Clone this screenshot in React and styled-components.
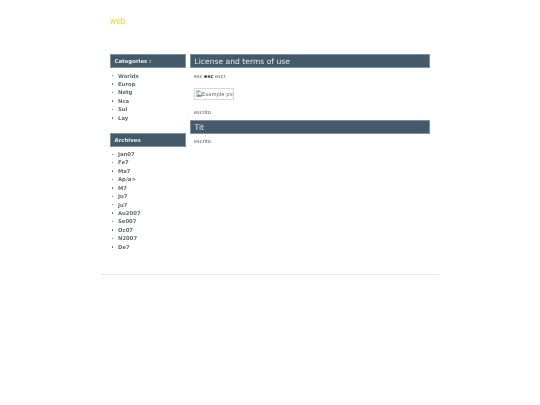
import React from "react";
import styled, { createGlobalStyle } from "styled-components";

const Global = createGlobalStyle`
  html, body { margin: 0; padding: 0; background: #fff; }
  body { font-family: "DejaVu Sans", Verdana, sans-serif; color: #444; }
`;

const Page = styled.div`
  width: 338px;
  margin: 0 0 0 101px;
  height: 405px;
  filter: blur(0.3px);
`;

const Masthead = styled.header`
  height: 54px;
  padding: 16px 0 0 9px;
  box-sizing: border-box;
  font-family: "Liberation Sans", Arial, sans-serif;
  font-size: 8.5px;
  line-height: 10px;
  color: #ebd52a;
`;

const Columns = styled.div`
  display: flex;
  gap: 4px;
  padding: 0 9px;
  height: 220px;
`;

const Sidebar = styled.aside`
  width: 76px;
  flex: none;
`;

const Main = styled.main`
  width: 240px;
  flex: none;
`;

const SideHeading = styled.h2`
  margin: 0;
  height: 14px;
  box-sizing: border-box;
  padding-left: 3.5px;
  background: #44596a;
  border: 1px solid #7d93a2;
  color: #e9eef1;
  font-size: 5.4px;
  font-weight: 700;
  line-height: 13px;
`;

const List = styled.ul`
  margin: 0 0 10.5px;
  padding: 3.5px 0 0 8px;
  list-style: none;
`;

const Item = styled.li`
  height: 8.43px;
  font-size: 5.3px;
  line-height: 8.43px;
  font-weight: 700;
  color: #5b6b78;
  position: relative;
  &::before {
    content: "";
    position: absolute;
    left: -6px;
    top: 3.5px;
    width: 1.4px;
    height: 1.4px;
    border-radius: 50%;
    background: #4c5c69;
  }
`;

const MainHeading = styled.h1`
  margin: ${(p) => p.$gap}px 0 0;
  height: 14px;
  box-sizing: border-box;
  padding-left: 3.5px;
  background: #44596a;
  border: 1px solid #7d93a2;
  color: #e4e9ec;
  font-size: 7.6px;
  font-weight: 400;
  line-height: 13px;
`;

const Paragraph = styled.p`
  margin: 0;
  padding: ${(p) => p.$top}px 0 0 4px;
  font-size: 5px;
  line-height: 8px;
  color: #444;
  strong { color: #2c2c2c; }
`;

const Picture = styled.div`
  margin: 8px 0 0 4px;
  width: 40px;
  height: 12px;
  box-sizing: border-box;
  border: 1px solid #d8d8d8;
  padding: 1px;
  display: flex;
  align-items: center;
  overflow: hidden;
  white-space: nowrap;
  font-size: 5.2px;
  color: #666;
  svg { flex: none; width: 6px; height: 7px; }
`;

const Footer = styled.footer`
  border-top: 1px solid #e6e6e6;
`;

const categories = ["Worlds", "Europ", "Netg", "Nca", "Sui", "Lay"];
const archives = ["Jan07", "Fe7", "Ma7", "Ap/a>", "M7", "Ju7", "Ju7", "Au2007", "Se007", "Oc07", "N2007", "De7"];

export default function App() {
  return (
    <>
      <Global />
      <Page>
        <Masthead>web</Masthead>
        <Columns>
          <Sidebar>
            <SideHeading>Categories :</SideHeading>
            <List>{categories.map((c, i) => <Item key={i}>{c}</Item>)}</List>
            <SideHeading>Archives</SideHeading>
            <List>{archives.map((c, i) => <Item key={i}>{c}</Item>)}</List>
          </Sidebar>
          <Main>
            <MainHeading $gap={0}>License and terms of use</MainHeading>
            <Paragraph $top={3.5}>esc <strong>esc</strong> escr</Paragraph>
            <Picture>
              <svg viewBox="0 0 12 14">
                <path d="M1 1h7l3 3v9H1z" fill="#e8eef4" stroke="#a0a0a0" />
                <path d="M1 13l4-5 3 3 3-2v4z" fill="#5a9a3c" />
                <path d="M2 2h5v3H2z" fill="#8fb6e0" />
              </svg>
              Example pic
            </Picture>
            <Paragraph $top={8}>escrito</Paragraph>
            <MainHeading $gap={4}>Tit</MainHeading>
            <Paragraph $top={3.5}>escrito</Paragraph>
          </Main>
        </Columns>
        <Footer />
      </Page>
    </>
  );
}
